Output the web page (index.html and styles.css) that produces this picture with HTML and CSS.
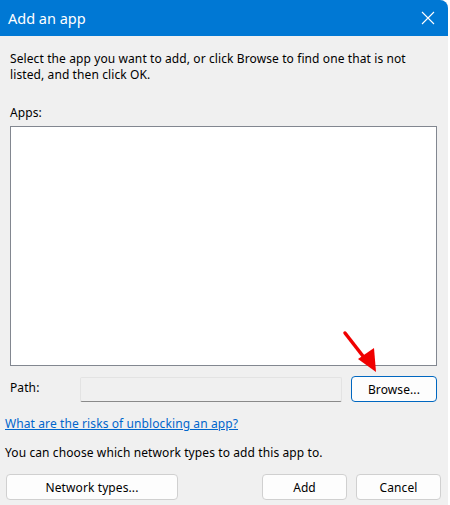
FILE: index.html
```html
<!DOCTYPE html>
<html>
<head>
<meta charset="utf-8">
<link rel="stylesheet" href="styles.css">
</head>
<body>
<div class="window">
  <div class="titlebar">
    <span class="title">Add an app</span>
    <svg class="close" width="14" height="14" viewBox="0 0 14 14"><path d="M1 1L13 13M13 1L1 13" stroke="#fff" stroke-width="1.1" fill="none"/></svg>
  </div>
  <div class="body">
    <p class="intro">Select the app you want to add, or click Browse to find one that is not listed, and then click OK.</p>
    <div class="apps-label">Apps:</div>
    <div class="listbox"></div>
    <div class="path-row">
      <span class="path-label">Path:</span>
      <div class="path-input"></div>
      <button class="btn btn-browse">Browse...</button>
    </div>
    <a class="link" href="#">What are the risks of unblocking an app?</a>
    <p class="note">You can choose which network types to add this app to.</p>
    <div class="buttons">
      <button class="btn btn-network">Network types...</button>
      <div class="spacer"></div>
      <button class="btn btn-add">Add</button>
      <button class="btn btn-cancel">Cancel</button>
    </div>
  </div>
  <svg class="arrow" width="50" height="50" viewBox="0 0 50 50">
    <line x1="3" y1="3" x2="24" y2="30" stroke="#F00000" stroke-width="3.5" stroke-linecap="round"/>
    <polygon points="16,29 32,18 34,42" fill="#F00000"/>
  </svg>
</div>
</body>
</html>
```
FILE: styles.css
```css
* { box-sizing: border-box; }
html, body { margin: 0; padding: 0; background: #ffffff; }
body { font-family: "Noto Sans", "Open Sans", sans-serif; font-size: 12px; color: #000; letter-spacing: 0.1px; }
.window {
  position: relative;
  width: 448px;
  height: 505px;
  background: #f0f0f0;
  border-top-right-radius: 8px;
  overflow: hidden;
}
.titlebar {
  height: 36px;
  background: #0078d4;
  color: #fff;
  display: flex;
  align-items: center;
  padding-left: 8px;
  padding-right: 13px;
}
.title { font-size: 14.5px; flex: 1; letter-spacing: 0; }
.close { display: block; }
.body { padding: 15px 11px 0 10px; display: flex; flex-direction: column; }
.intro { margin: 0; line-height: 16px; max-width: 405px; }
.apps-label { margin-top: 22px; line-height: 16px; }
.listbox {
  margin-top: 5px;
  height: 240px;
  width: 427px;
  background: #fff;
  border: 1px solid #828790;
}
.path-row {
  margin-top: 10px;
  display: flex;
  align-items: center;
  height: 26px;
}
.path-label { width: 70px; line-height: 16px; margin-top: -3px; }
.path-input {
  width: 262px;
  height: 25px;
  background: #f0f0f0;
  border: 1px solid #e3e3e3;
  border-bottom-color: #8a8a8a;
  border-radius: 2px;
}
.btn {
  font-family: inherit;
  font-size: 12px;
  letter-spacing: 0.1px;
  color: #000;
  background: #fdfdfd;
  border: 1px solid #d0d0d0;
  border-radius: 4px;
  height: 26px;
  padding: 0;
}
.btn-browse { margin-left: 9px; width: 86px; border-color: #0067c0; }
.link {
  margin: 14px 0 0 -5px;
  color: #0066cc;
  text-decoration: underline;
  line-height: 16px;
  align-self: flex-start;
}
.note { margin: 13px 0 0 -5px; line-height: 16px; }
.buttons { margin: 13px 0 0 -4px; display: flex; }
.btn-network { width: 172px; }
.spacer { flex: 1; }
.btn-add { width: 85px; }
.btn-cancel { width: 85px; margin-left: 9px; margin-right: -4px; }
.arrow { position: absolute; left: 342px; top: 330px; }
```
